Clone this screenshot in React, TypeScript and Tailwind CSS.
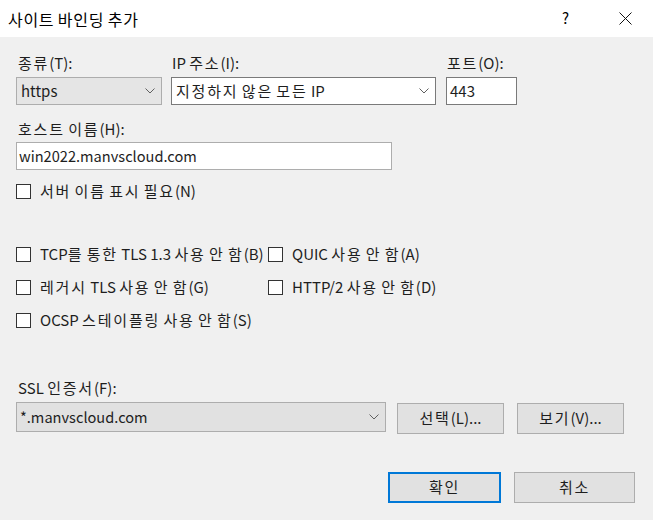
import React from 'react';

const font = { fontFamily: '"Noto Sans CJK KR", "Liberation Sans", sans-serif' };

// hangul is set a little wider than Noto's default to match the dialog font
function Ko({ text, wide = 'tracking-[1.8px]' }: { text: string; wide?: string }) {
  const parts = text.split(/([\uAC00-\uD7A3]+)/);
  return (
    <>
      {parts.map((p, i) =>
        /[\uAC00-\uD7A3]/.test(p) ? (
          <span key={i} className={wide}>
            {p}
          </span>
        ) : (
          <span key={i}>{p}</span>
        )
      )}
    </>
  );
}

function Chevron() {
  return (
    <svg width="10" height="6" viewBox="0 0 10 6" className="shrink-0">
      <polyline points="0.5,0.5 5,5 9.5,0.5" fill="none" stroke="#606060" strokeWidth="1" />
    </svg>
  );
}

function Check({ label }: { label: string }) {
  return (
    <div className="flex items-center h-[20px]">
      <div className="w-[15px] h-[15px] border border-[#333333] bg-white shrink-0" />
      <span className="ml-[9px] whitespace-nowrap">
        <Ko text={label} />
      </span>
    </div>
  );
}

export default function App() {
  return (
    <div
      className="w-[653px] h-[520px] bg-[#f0f0f0] text-[15px] text-[#1e1e1e] overflow-hidden"
      style={font}
    >
      {/* Title bar */}
      <div className="h-[37px] bg-white flex items-center">
        <span className="ml-[8px] text-[16px] text-black">
          <Ko text="사이트 바인딩 추가" wide="tracking-[0.7px]" />
        </span>
        <span className="ml-auto mr-[50px] text-[15px] text-black">?</span>
        <svg width="13" height="13" viewBox="0 0 13 13" className="mr-[21px]">
          <path d="M0.5 0.5 L12.5 12.5 M12.5 0.5 L0.5 12.5" stroke="#111" strokeWidth="1" />
        </svg>
      </div>

      <div className="pl-[16px] pt-[15px]">
        {/* type / ip / port */}
        <div className="flex">
          <div className="w-[146px]">
            <div className="h-[22px] pl-[2px] leading-[22px]">
              <Ko text="종류(T):" />
            </div>
            <div className="mt-[3px] h-[28px] bg-[#e5e5e5] border border-[#adadad] flex items-center pl-[4px] pr-[6px]">
              <span className="flex-1">https</span>
              <Chevron />
            </div>
          </div>
          <div className="w-[265px] ml-[9px]">
            <div className="h-[22px] pl-[1px] leading-[22px]">
              <Ko text="IP 주소(I):" />
            </div>
            <div className="mt-[3px] h-[28px] bg-white border border-[#7a7a7a] flex items-center pl-[4px] pr-[6px]">
              <span className="flex-1">
                <Ko text="지정하지 않은 모든 IP" />
              </span>
              <Chevron />
            </div>
          </div>
          <div className="w-[71px] ml-[10px]">
            <div className="h-[22px] pl-[1px] leading-[22px]">
              <Ko text="포트(O):" />
            </div>
            <div className="mt-[3px] h-[28px] bg-white border border-[#7a7a7a] flex items-center pl-[3px]">
              443
            </div>
          </div>
        </div>

        {/* host name */}
        <div className="mt-[13px] h-[22px] pl-[2px] leading-[22px]">
          <Ko text="호스트 이름(H):" />
        </div>
        <div className="mt-[2px] w-[376px] h-[28px] bg-white border border-[#adadad] flex items-center pl-[2px] text-[14.6px]">
          win2022.manvscloud.com
        </div>

        <div className="mt-[11px]">
          <Check label="서버 이름 표시 필요(N)" />
        </div>

        {/* tls options */}
        <div className="mt-[43px] grid grid-cols-[252px_auto] gap-y-[13px]">
          <Check label="TCP를 통한 TLS 1.3 사용 안 함(B)" />
          <Check label="QUIC 사용 안 함(A)" />
          <Check label="레거시 TLS 사용 안 함(G)" />
          <Check label="HTTP/2 사용 안 함(D)" />
          <Check label="OCSP 스테이플링 사용 안 함(S)" />
        </div>

        {/* ssl */}
        <div className="mt-[47px] h-[22px] pl-[2px] leading-[22px]">
          <Ko text="SSL 인증서(F):" />
        </div>
        <div className="mt-[3px] flex items-start">
          <div className="w-[370px] h-[30px] bg-[#e1e1e1] border border-[#adadad] flex items-center pl-[3px] pr-[6px] text-[14.6px]">
            <span className="flex-1">*.manvscloud.com</span>
            <Chevron />
          </div>
          <button className="ml-[11px] mt-[1px] w-[107px] h-[31px] bg-[#e1e1e1] border border-[#adadad]">
            <Ko text="선택(L)..." />
          </button>
          <button className="ml-[13px] mt-[1px] w-[107px] h-[31px] bg-[#e1e1e1] border border-[#adadad]">
            <Ko text="보기(V)..." />
          </button>
        </div>

        {/* ok / cancel */}
        <div className="mt-[38px] flex">
          <button className="ml-[372px] w-[113px] h-[31px] bg-[#e1e1e1] border-2 border-[#0078d7]">
            <Ko text="확인" />
          </button>
          <button className="ml-[13px] w-[121px] h-[31px] bg-[#e1e1e1] border border-[#adadad]">
            <Ko text="취소" />
          </button>
        </div>
      </div>
    </div>
  );
}
